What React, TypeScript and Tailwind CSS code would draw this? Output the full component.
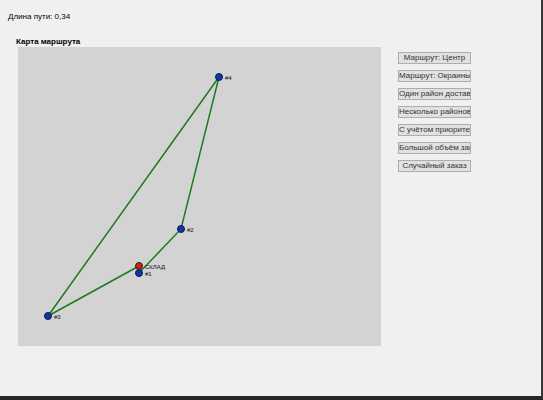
const points = [
  { id: "#1", x: 121, y: 226 },
  { id: "#2", x: 163, y: 182 },
  { id: "#3", x: 30, y: 269 },
  { id: "#4", x: 201, y: 30 },
];

const depot = { x: 121, y: 219 };

const route = [depot, points[0], points[1], points[3], points[2], depot];

const buttons = [
  "Маршрут: Центр",
  "Маршрут: Окраины",
  "Один район доставки",
  "Несколько районов",
  "С учётом приоритетов",
  "Большой объём заказов",
  "Случайный заказ",
];

export default function App() {
  return (
    <div
      className="flex h-[400px] w-[543px] flex-col border-r-2 border-b-4 border-r-[#3a3a3a] border-b-[#262626] bg-[#f0f0f0] text-[8px] text-black"
      style={{ fontFamily: '"Liberation Sans", Arial, sans-serif' }}
    >
      <div className="pl-[8px] pt-[12px] leading-[10px]">Длина пути: 0,34</div>

      <div className="mt-[15px] flex">
        <div className="flex flex-col pl-[16px]">
          <div className="font-bold leading-[10px]">Карта маршрута</div>
          <div className="ml-[2px] h-[299px] w-[363px] bg-[#d3d3d3]">
            <svg width="363" height="299" viewBox="0 0 363 299">
              <polyline
                points={route.map((p) => `${p.x},${p.y}`).join(" ")}
                fill="none"
                stroke="#1f7a1f"
                strokeWidth="1.5"
              />
              {points.map((p) => (
                <g key={p.id}>
                  <circle cx={p.x} cy={p.y} r="3.5" fill="#1434a4" stroke="#0b1a5a" strokeWidth="1" />
                  <text x={p.x + 6} y={p.y + 3} fontSize="6" fill="#111">
                    {p.id}
                  </text>
                </g>
              ))}
              <circle cx={depot.x} cy={depot.y} r="3.5" fill="#c0281c" stroke="#3a1a10" strokeWidth="1" />
              <text x={depot.x + 6} y={depot.y + 3} fontSize="6" fill="#111">
                СКЛАД
              </text>
            </svg>
          </div>
        </div>

        <div className="ml-[17px] mt-[15px] flex flex-col gap-[6px]">
          {buttons.map((label) => (
            <div
              key={label}
              className="h-[12px] w-[73px] overflow-hidden whitespace-nowrap border border-[#adadad] bg-[#e1e1e1] text-center leading-[10px] text-[#333]"
            >
              {label}
            </div>
          ))}
        </div>
      </div>
    </div>
  );
}
